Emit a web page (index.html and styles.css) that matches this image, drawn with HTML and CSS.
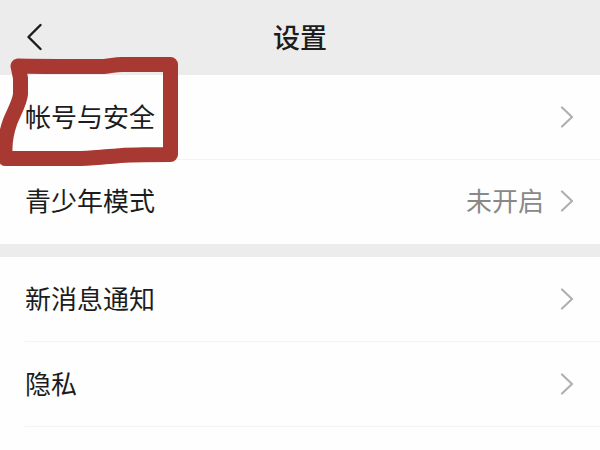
FILE: index.html
```html
<!DOCTYPE html>
<html lang="zh-CN">
<head>
<meta charset="utf-8">
<meta name="viewport" content="width=device-width, initial-scale=1">
<title>设置</title>
<link rel="stylesheet" href="styles.css">
</head>
<body>
<header class="bar">
  <button class="back" type="button" aria-label="返回">
    <svg width="16" height="28" viewBox="0 0 16 28"><path d="M14.5 2 2.500 14l12 12"/></svg>
  </button>
  <h1 class="title">设置</h1>
</header>
<main>
  <nav class="group">
    <a class="row marked" href="#account">
      <span class="label">帐号与安全</span>
      <svg class="arrow" width="14" height="22" viewBox="0 0 14 22"><path d="M2 1.500 12 11 2 20.500"/></svg>
      <svg class="mark" width="180" height="112" viewBox="0 56 180 112"><path d="M18 66C30 66.500 80 66.500 104 66.500C112 66 114 64.500 122 64.500H170.500V154.500C150 154.500 130 154.500 116 156C100 157 90 158.500 76 158.500H5.500C4 147 5 136 10 122C14 112 20 102 20.500 94V78Z"/></svg>
    </a>
    <a class="row" href="#teen">
      <span class="label">青少年模式</span>
      <span class="value">未开启</span>
      <svg class="arrow" width="14" height="22" viewBox="0 0 14 22"><path d="M2 1.500 12 11 2 20.500"/></svg>
    </a>
  </nav>
  <nav class="group">
    <a class="row" href="#notifications">
      <span class="label">新消息通知</span>
      <svg class="arrow" width="14" height="22" viewBox="0 0 14 22"><path d="M2 1.500 12 11 2 20.500"/></svg>
    </a>
    <a class="row" href="#privacy">
      <span class="label">隐私</span>
      <svg class="arrow" width="14" height="22" viewBox="0 0 14 22"><path d="M2 1.500 12 11 2 20.500"/></svg>
    </a>
  </nav>
</main>
</body>
</html>
```
FILE: styles.css
```css
* {
  box-sizing: border-box;
}

body {
  margin: 0;
  background: #fefefe;
  color: #1c1c1c;
  font-family: "Noto Sans CJK SC", sans-serif;
  font-size: 26px;
  line-height: 40px;
}

svg {
  display: block;
  fill: none;
  stroke-linecap: round;
  stroke-linejoin: round;
}

.bar {
  display: grid;
  grid-template-columns: 1fr auto 1fr;
  align-items: center;
  height: 75px;
  padding: 0 26px 2px;
  background: #ececec;
}

.back {
  justify-self: start;
  padding: 0;
  border: 0;
  background: none;
  stroke: #1c1c1c;
  stroke-width: 2.4;
}

.title {
  margin: 0;
  font-size: 27px;
  font-weight: 500;
}

.group + .group {
  border-top: 13px solid #ececec;
}

.row {
  position: relative;
  display: flex;
  align-items: center;
  height: 85px;
  padding: 0 26px 2px 25px;
  color: inherit;
  text-decoration: none;
}

.row::after {
  content: "";
  position: absolute;
  right: 0;
  bottom: 0;
  left: 25px;
  height: 1px;
  background: #f3f3f3;
}

.group:first-child .row:last-child {
  height: 84px;
}

.group:first-child .row:last-child::after {
  display: none;
}

.label,
.value {
  padding-bottom: 2px;
}

.label {
  flex: 1;
}

.value {
  margin-right: 16px;
  color: #888;
}

.arrow {
  stroke: #b0b0b0;
  stroke-width: 2.2;
}

.mark {
  position: absolute;
  top: -19px;
  left: 0;
  z-index: 1;
  stroke: #a73832;
  stroke-width: 15;
  pointer-events: none;
}
```
